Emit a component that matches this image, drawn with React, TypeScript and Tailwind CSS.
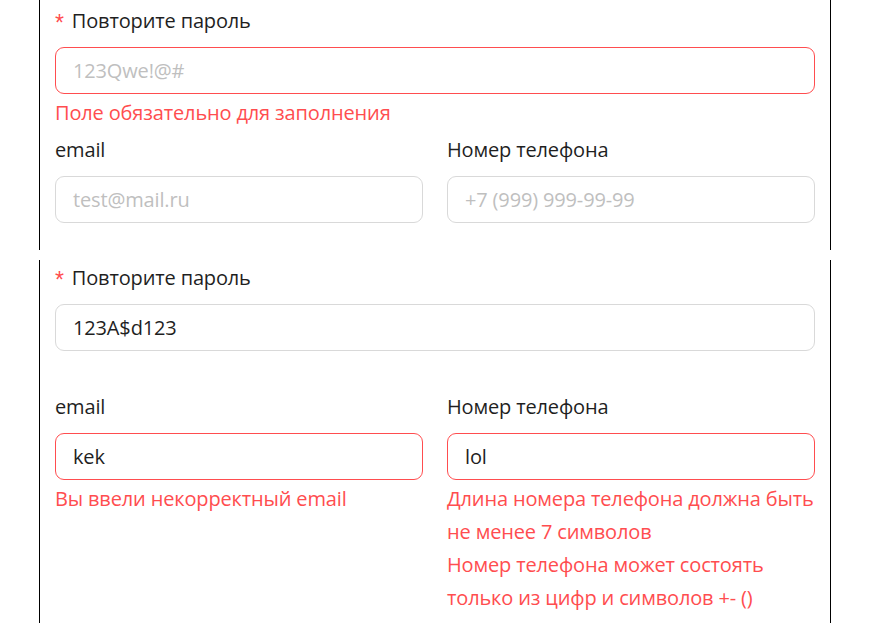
import React from 'react';

const font = "font-['Open_Sans','Noto_Sans',sans-serif] tracking-[-0.15px]";

function Label({ text, required }: { text: string; required?: boolean }) {
  return (
    <div className="h-[33px] leading-[33px] text-[20px] text-[#1f1f1f] mb-[10px] flex items-center">
      {required && (
        <span className="text-[#ff4d4f] mr-[8px] font-['Liberation_Sans',sans-serif] text-[23px] leading-none translate-y-[3px]">*</span>
      )}
      {text}
    </div>
  );
}

function Input({ value, placeholder, error }: { value?: string; placeholder?: string; error?: boolean }) {
  return (
    <div
      className={`h-[47px] rounded-[9px] border px-[17px] flex items-center text-[20px] ${
        error ? 'border-[#ff4d4f]' : 'border-[#d9d9d9]'
      }`}
    >
      {value ? (
        <span className="text-[#1f1f1f]">{value}</span>
      ) : (
        <span className="text-[#bfbfbf]">{placeholder}</span>
      )}
    </div>
  );
}

function Explain({ children }: { children: React.ReactNode }) {
  return <div className="mt-[2px] text-[20px] leading-[33px] text-[#ff4d4f] whitespace-nowrap">{children}</div>;
}

export default function App() {
  return (
    <div className={`w-[891px] h-[623px] bg-white overflow-hidden ${font}`}>
      {/* first screenshot */}
      <div className="ml-[39px] w-[792px] h-[250px] border-x border-black px-[15px] pt-[4px] overflow-hidden">
        <Label text="Повторите пароль" required />
        <Input placeholder="123Qwe!@#" error />
        <Explain>Поле обязательно для заполнения</Explain>
        <div className="grid grid-cols-2 gap-x-[24px] mt-[4px]">
          <div>
            <Label text="email" />
            <Input placeholder="test@mail.ru" />
          </div>
          <div>
            <Label text="Номер телефона" />
            <Input placeholder="+7 (999) 999-99-99" />
          </div>
        </div>
      </div>

      {/* second screenshot */}
      <div className="mt-[10px] ml-[39px] w-[792px] h-[363px] border-x border-black px-[15px] pt-[1px] overflow-hidden">
        <Label text="Повторите пароль" required />
        <Input value="123A$d123" />
        <div className="grid grid-cols-2 gap-x-[24px] mt-[39px]">
          <div>
            <Label text="email" />
            <Input value="kek" error />
            <Explain>Вы ввели некорректный email</Explain>
          </div>
          <div>
            <Label text="Номер телефона" />
            <Input value="lol" error />
            <Explain>
              Длина номера телефона должна быть
              <br />
              не менее 7 символов
              <br />
              Номер телефона может состоять
              <br />
              только из цифр и символов +- ()
            </Explain>
          </div>
        </div>
      </div>
    </div>
  );
}
